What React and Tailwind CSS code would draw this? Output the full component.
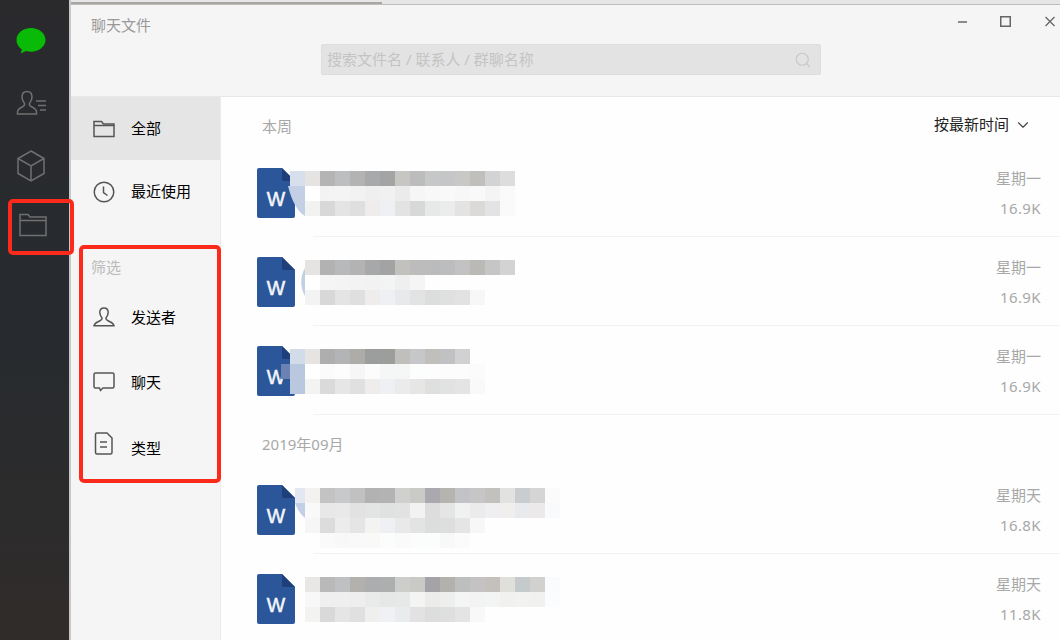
import { Search, ChevronDown } from 'lucide-react';

const font = { fontFamily: '"Noto Sans", "Noto Sans CJK SC", sans-serif' };

const files = [
  {
    day: '星期一',
    size: '16.9K',
    curve: 'M-2 15 H15 V45 C8 41 2 31 -2 15 Z',
    rows: [
      ['#d8dfec', '#e5e4e2', '#b4b4b4', '#bdbebf', '#b3b3b3', '#a8a9aa', '#a3a4a3', '#c8c6c3', '#bcbcbc', '#c6c7c7', '#c5c6c7', '#c8c8c7', '#c0bfbc', '#d2d3d5', '#dcdddc'],
      [null, '#ffffff', '#f3f3f3', '#f4f4f4', '#f2f2f2', '#efefef', '#f1f1f1', '#ebebeb', '#f6f6f6', '#f8f8f8', '#f9f9f9', '#f7f7f7', '#f9f9f9', '#f4f4f4', '#fafafa'],
      [null, '#f2f3f1', '#d8d8d8', '#e4e4e4', '#dfdfdf', '#eeedeb', '#eff0f3', '#e3e3e3', '#d8d8d8', '#e7e8e8', '#ebecec', '#e3e3e3', '#dbdad8', '#e3e3e6', '#fafafa'],
    ],
  },
  {
    day: '星期一',
    size: '16.9K',
    curve: 'M15 8 C10 16 10 28 15 36 Z',
    rows: [
      [null, '#e5e4e2', '#b2b2b2', '#b8b9ba', '#b3b3b3', '#a7a8a9', '#a3a3a3', '#c3c1be', '#bcbcbc', '#bbbbbb', '#bcbdbf', '#c2c2c2', '#bbb9b6', '#c6c6c6', '#d2d3d2'],
      [null, '#ffffff', '#f5f5f5', '#f4f4f4', '#f3f3f3', '#f2f2f2', '#f3f4f4', '#efefef', '#f5f5f5'],
      [null, '#f3f3f3', '#d8d8d8', '#e4e4e4', '#dfdfdf', '#eeedeb', '#eff0f3', '#e8e9ea', '#e3e3e3', '#dcdddd', '#dfe0e0', '#e2e2e2', '#f7f7f7'],
    ],
  },
  {
    day: '星期一',
    size: '16.9K',
    rows: [
      ['#d2dce8', '#e5e4e2', '#aeaeae', '#b3b4b6', '#aeaca8', '#9c9e9d', '#9c9e9c', '#c0bfbb', '#c5c7c8', '#c1bfbb', '#c0c1c3', '#d0d1d0'],
      ['#bac8df', '#ffffff', '#fbfbfb', '#fdfdfd', '#f6f6f6', '#fbfcfb', '#f5f6f6', '#f5f7f6', '#fcfdfd', '#fdfdfd', '#fcfcfc', '#fcfcfc', '#fbfbfb'],
      ['#bac8df', '#f3f3f1', '#dadada', '#e6e6e6', '#e0e0e0', '#eeedeb', '#eff0f3', '#ebebec', '#e6e6e5', '#dedfde', '#e1e2e2', '#e3e4e3', '#f8f9f8'],
    ],
    overlay: true,
  },
  {
    day: '星期天',
    size: '16.8K',
    curve: 'M5 15 H15 V30 C11 27 7 21 5 15 Z',
    cap: true,
    rows: [
      [null, '#f3f2f0', '#c3c3c3', '#c8c9ca', '#c1c1c1', '#b2b2b2', '#b3b3b3', '#d0d0ce', '#cacac6', '#a9a9af', '#b6b4af', '#c2c3c6', '#c6c6c6', '#c2c1bd', '#e2e2e0', '#c9cdd0', '#d5d5d5', '#fafbfa'],
      [null, '#f9f9f9', '#e8e8e8', '#e9e9e9', '#e2e2e2', '#e3e4e4', '#e0e2e2', '#e2e2e2', '#f2f2f2', '#dddddd', '#e5e5e5', '#f0f2f2', '#ebebec', '#efeff1', '#f0efed', '#e9eaed', '#ebe9e9', '#f9fafb'],
      [null, '#f6f6f6', '#dcdcdc', '#ececec', '#e5e5e5', '#f3f3f1', '#eff0f3', '#e9e9e9', '#e3e3e3', '#dcdddd', '#dddfdf', '#e5e5e5', '#f7f7f7'],
      [null, null, '#fafafa', '#f8f8f8', '#f9f9f9', '#f9f9f8', '#fbfcfc', '#fafafa', '#fbfcfc', '#fbfcfc', '#f8f8f8', '#fbfbfb'],
    ],
  },
  {
    day: '星期天',
    size: '11.8K',
    rows: [
      [null, '#e8e7e5', '#b9b9b9', '#bfc0c1', '#b3b1ae', '#acadae', '#adafae', '#cdcdcb', '#c9cac6', '#a3a3a8', '#b3b1ac', '#bdbfbf', '#c4c2c3', '#c4c0bc', '#dfdfdc', '#c5cacc', '#d1d1d0', '#fafbfd'],
      [null, '#f8f8f8', '#efefef', '#efefef', '#eeeeee', '#e9eaea', '#e6e8e8', '#e7e8e8', '#f4f4f2', '#ececec', '#eeeeec', '#f4f5f5', '#f3f3f3', '#f3f5f5', '#f1f1ef', '#f2f2f1', '#f1f1f0', '#fbfcfe'],
      [null, '#f3f3f2', '#d9d9d9', '#e5e5e5', '#e0e0e0', '#efefed', '#eff1f4', '#e9ecec', '#e2e2e2', '#dcdddc', '#dee0df', '#e4e4e4', '#f8f8f8'],
    ],
  },
];

function WordIcon() {
  return (
    <svg width="38" height="50" viewBox="0 0 38 50" className="shrink-0">
      <path d="M2 0H25L38 13V48a2 2 0 0 1-2 2H2a2 2 0 0 1-2-2V2a2 2 0 0 1 2-2Z" fill="#2b579a" />
      <path d="M25 0L38 13H27a2 2 0 0 1-2-2Z" fill="#1e3f7a" />
      <text x="19" y="38" textAnchor="middle" fontSize="19.500" fill="#f4f6fa" stroke="#f4f6fa" strokeWidth="0.500" fontFamily="Liberation Sans, sans-serif">W</text>
    </svg>
  );
}

function Mosaic({ rows, curve, overlay, cap }) {
  return (
    <div className="relative -ml-[5px] mt-[3px] flex flex-col">
      {curve && (
        <svg width="20" height="50" viewBox="0 0 20 50" className="absolute left-0 top-0 overflow-visible">
          <path d={curve} fill="#c3cfe4" />
        </svg>
      )}
      {cap && <div className="absolute left-[5px] top-0 h-[15px] w-[10px] bg-[#e2e7f1]" />}
      {rows.map((row, i) => (
        <div key={i} className="relative flex h-[15px]">
          {row.map((c, j) => (
            <div key={j} className="h-[15px] w-[15px]" style={{ background: c || 'transparent' }} />
          ))}
        </div>
      ))}
      {overlay && <div className="absolute left-[-9px] top-[15px] h-[15px] w-[9px] bg-[#6b82b3]" />}
    </div>
  );
}

function FileRow({ file, last }) {
  return (
    <div className="relative flex h-[89px] pl-[36px] pr-[19px] pt-[20px]">
      <WordIcon />
      <Mosaic rows={file.rows} curve={file.curve} overlay={file.overlay} cap={file.cap} />
      <div className="ml-auto flex flex-col items-end text-[15px] leading-[20px] text-[#a8a8a8]">
        <span>{file.day}</span>
        <span className="mt-[10px] tracking-[0.4px]">{file.size}</span>
      </div>
      {!last && <div className="absolute bottom-0 left-[92px] right-0 h-px bg-[#f2f2f2]" />}
    </div>
  );
}

function NavItem({ icon, label, className = '' }) {
  return (
    <div className={`flex items-center pl-[22px] ${className}`}>
      <div className="w-[38px]">{icon}</div>
      <span className="text-[15px] text-black">{label}</span>
    </div>
  );
}

const navStroke = { fill: 'none', stroke: '#555555', strokeWidth: 1.5 };

export default function App() {
  return (
    <div className="relative flex h-[640px] w-[1060px] overflow-hidden bg-white" style={font}>
      {/* dock */}
      <div className="flex h-full w-[69px] shrink-0 flex-col items-start bg-gradient-to-b from-[#2a2a2d] via-[#272b2f] to-[#302c2a] pl-[15px]">
        <svg width="32" height="28" viewBox="0 0 32 28" className="mt-[27px]">
          <path d="M16 1C8 1 1.500 6 1.500 13C1.500 17 4 20.500 7 22.500L5.500 26.500L11 24C12.800 24.500 14.300 24.800 16 24.800C24 24.800 30.500 19.500 30.500 13C30.500 6 24 1 16 1Z" fill="#09bb07" />
        </svg>
        <svg width="32" height="28" viewBox="0 0 32 28" className="mt-[34px] ml-[1px]" fill="none" stroke="#707070" strokeWidth="1.500">
          <path d="M11 2.500C7.500 2.500 6 5 6 8C6 11 7 12.500 8.500 14.500C9 16 8.500 17 6 18C4 19 1.500 20 1.500 23V25H20.500V23C20.500 20.500 18 19 16 18C13.500 17 13 16 13.500 14.500C15 12.500 16 11 16 8C16 5 14.500 2.500 11 2.500Z" />
          <path d="M20 12H30M22 16.500H30M24 21H30" />
        </svg>
        <svg width="28" height="32" viewBox="0 0 28 32" className="mt-[33px] ml-[2px]" fill="none" stroke="#707070" strokeWidth="1.500">
          <path d="M14 1L27 8.500V23.500L14 31L1 23.500V8.500Z" />
          <path d="M1 8.500L14 16L27 8.500M14 16V31" />
        </svg>
        <svg width="28" height="24" viewBox="0 0 28 24" className="mt-[31px] ml-[4px]" fill="none" stroke="#707070" strokeWidth="1.500">
          <path d="M1 22.500V1.500H9L11 4H27V22.500Z" />
          <path d="M1 7.500H27" />
        </svg>
      </div>

      {/* window */}
      <div className="flex h-full flex-1 flex-col border-l-2 border-[#c8c8c8]">
        <div className="flex h-[5px] shrink-0 border-b border-[#bdbdbd] bg-[#e6e6e6]">
          <div className="mt-[2px] w-[311px] bg-[#aaa6a2]" />
        </div>
        <div className="relative h-[92px] shrink-0 border-b border-[#e8e8e8] bg-[#f5f5f5]">
          <div className="pl-[20px] pt-[10px] text-[15px] leading-[20px] text-[#999999]">聊天文件</div>
          <div className="absolute right-[5px] top-[11px] flex items-center">
            <svg width="9" height="11" viewBox="0 0 9 11" className="mr-[33px]" fill="none" stroke="#666666" strokeWidth="1.500">
              <path d="M0 6H9" />
            </svg>
            <svg width="11" height="11" viewBox="0 0 11 11" className="mr-[34px]" fill="none" stroke="#666666" strokeWidth="1.500">
              <rect x="0.750" y="0.750" width="9.500" height="9.500" />
            </svg>
            <svg width="10" height="11" viewBox="0 0 10 11" fill="none" stroke="#666666" strokeWidth="1.300">
              <path d="M0.500 1L9.500 10M9.500 1L0.500 10" />
            </svg>
          </div>
          <div className="ml-[250px] mt-[9px] flex h-[31px] w-[500px] items-center justify-between rounded-[2px] border border-[#dedede] bg-[#e3e3e3] pl-[5px] pr-[8px]">
            <span className="text-[15px] text-[#c4c4c4]">搜索文件名 / 联系人 / 群聊名称</span>
            <Search size={18} strokeWidth={1.5} className="text-[#c8c8c8]" />
          </div>
        </div>

        <div className="flex min-h-0 flex-1">
          <div className="flex w-[150px] shrink-0 flex-col border-r border-[#ebebeb] bg-[#f5f5f5]">
            <NavItem
              className="h-[63px] bg-[#e5e5e5]"
              label="全部"
              icon={
                <svg width="22" height="18" viewBox="0 0 22 18" {...navStroke}>
                  <path d="M1 16.500V1.500H8.500L10.500 4H21V16.500Z" />
                  <path d="M1 5.500H21" />
                </svg>
              }
            />
            <NavItem
              className="h-[63px]"
              label="最近使用"
              icon={
                <svg width="22" height="22" viewBox="0 0 22 22" {...navStroke}>
                  <circle cx="11" cy="11" r="9.800" />
                  <path d="M10.500 5.500V11.500L14.500 14.500" />
                </svg>
              }
            />
            <div className="pl-[20px] pt-[34px] text-[15px] leading-[20px] text-[#bbbbbb]">筛选</div>
            <NavItem
              className="mt-[20px] h-[40px]"
              label="发送者"
              icon={
                <svg width="22" height="20" viewBox="0 0 22 20" {...navStroke}>
                  <path d="M11 1C8 1 6.800 3.200 6.800 5.500C6.800 8 7.800 9.500 9 11C9.300 12.200 8.500 13 6.500 14C4.500 15 1.500 15.800 1 18.800H21C20.500 15.800 17.500 15 15.500 14C13.500 13 12.700 12.200 13 11C14.200 9.500 15.200 8 15.200 5.500C15.200 3.200 14 1 11 1Z" />
                </svg>
              }
            />
            <NavItem
              className="mt-[25px] h-[40px]"
              label="聊天"
              icon={
                <svg width="22" height="20" viewBox="0 0 22 20" {...navStroke}>
                  <path d="M2.500 1H19.500A1.500 1.500 0 0 1 21 2.500V14.500A1.500 1.500 0 0 1 19.500 16H10L7.500 18.500L6.500 16H2.500A1.500 1.500 0 0 1 1 14.500V2.500A1.500 1.500 0 0 1 2.500 1Z" />
                </svg>
              }
            />
            <NavItem
              className="mt-[26px] h-[40px]"
              label="类型"
              icon={
                <svg width="20" height="23" viewBox="0 0 20 23" className="-mt-[9px] ml-[1px]" {...navStroke}>
                  <path d="M3 1H13L18 6V20.500A1.500 1.500 0 0 1 16.500 22H3A1.500 1.500 0 0 1 1.500 20.500V2.500A1.500 1.500 0 0 1 3 1Z" />
                  <path d="M6 10H13M6 15H13" />
                </svg>
              }
            />
          </div>

          <div className="min-w-0 flex-1 bg-[#fefefe]">
            <div className="flex h-[51px] justify-between pl-[41px] pr-[29px] text-[15px] leading-[20px]">
              <span className="pt-[19px] text-[#a8a8a8]">本周</span>
              <span className="flex items-center gap-[5px] self-start pt-[16px] text-[#222222]">
                按最新时间
                <ChevronDown size={18} strokeWidth={1.5} className="-mr-[1px] mt-[3px] text-[#444444]" />
              </span>
            </div>
            {files.slice(0, 3).map((f, i) => (
              <FileRow key={i} file={f} />
            ))}
            <div className="h-[50px] pl-[41px] pt-[19px] text-[15px] leading-[20px] text-[#a8a8a8]">2019年09月</div>
            {files.slice(3).map((f, i) => (
              <FileRow key={i} file={f} last={i === 1} />
            ))}
          </div>
        </div>
      </div>

      {/* red annotation boxes */}
      <div className="absolute left-[8px] top-[199px] h-[56px] w-[66px] rounded-[5px] border-4 border-[#fb2a1a]" />
      <div className="absolute left-[79px] top-[245px] h-[238px] w-[142px] rounded-[5px] border-4 border-[#fb2a1a]" />
    </div>
  );
}
